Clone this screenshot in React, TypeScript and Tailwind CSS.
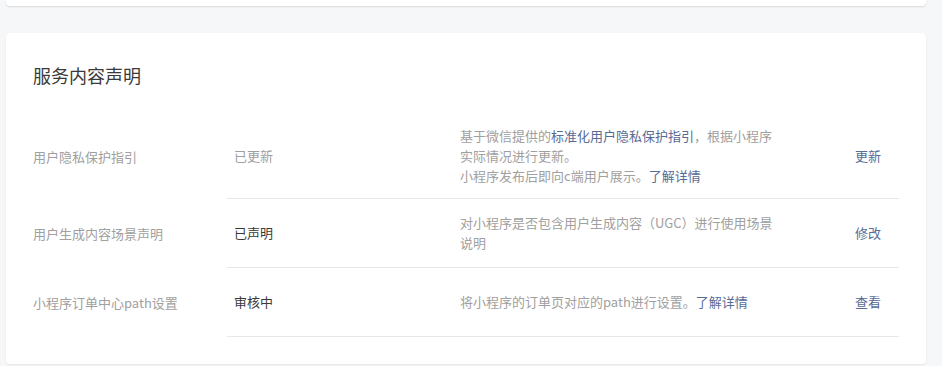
const font = { fontFamily: '"Noto Sans CJK SC", "Noto Sans", sans-serif' }

type Row = {
  label: string
  status: string
  dark: boolean
  desc: React.ReactNode
  action: string
}

const Link = ({ children }: { children: React.ReactNode }) => (
  <span className="text-[#576b95]">{children}</span>
)

const rows: Row[] = [
  {
    label: "用户隐私保护指引",
    status: "已更新",
    dark: false,
    desc: (
      <>
        <div className="whitespace-nowrap">
          基于微信提供的<Link>标准化用户隐私保护指引</Link>，根据小程序
        </div>
        <div className="whitespace-nowrap">实际情况进行更新。</div>
        <div className="whitespace-nowrap">
          小程序发布后即向c端用户展示。<Link>了解详情</Link>
        </div>
      </>
    ),
    action: "更新",
  },
  {
    label: "用户生成内容场景声明",
    status: "已声明",
    dark: true,
    desc: (
      <>
        <div className="whitespace-nowrap">对小程序是否包含用户生成内容（UGC）进行使用场景</div>
        <div className="whitespace-nowrap">说明</div>
      </>
    ),
    action: "修改",
  },
  {
    label: "小程序订单中心path设置",
    status: "审核中",
    dark: true,
    desc: (
      <div className="whitespace-nowrap">
        将小程序的订单页对应的path进行设置。<Link>了解详情</Link>
      </div>
    ),
    action: "查看",
  },
]

export default function App() {
  return (
    <div className="w-[942px] h-[366px] overflow-hidden bg-[#f6f7f9] pl-[6px] pr-[16px]" style={font}>
      <div className="h-[6px] bg-white rounded-b-[4px] shadow-[0_1px_2px_rgba(0,0,0,0.12)]" />

      <div className="mt-[27px] bg-white rounded-[4px] shadow-[0_1px_2px_rgba(0,0,0,0.08)] px-[27px] pt-[30px] pb-[27px]">
        <h2 className="text-[18px] leading-[24px] text-[#3a3a3a]">服务内容声明</h2>

        <div className="mt-[27px]">
          {rows.map((r) => (
            <div key={r.label} className="flex items-stretch">
              <div className="w-[194px] shrink-0 flex items-center text-[13px] text-[#a0a0a0]">
                {r.label}
              </div>
              <div className="flex-1 flex items-center min-h-[69px] py-[12px] border-b border-[#e7e7e7] text-[13px] leading-[20px]">
                <div className={`w-[233px] shrink-0 pl-[7px] ${r.dark ? "text-[#3a3a3a]" : "text-[#a0a0a0]"}`}>
                  {r.status}
                </div>
                <div className="flex-1 text-[#a0a0a0]">{r.desc}</div>
                <div className="w-[44px] shrink-0 text-[#576b95]">{r.action}</div>
              </div>
            </div>
          ))}
        </div>
      </div>
    </div>
  )
}
